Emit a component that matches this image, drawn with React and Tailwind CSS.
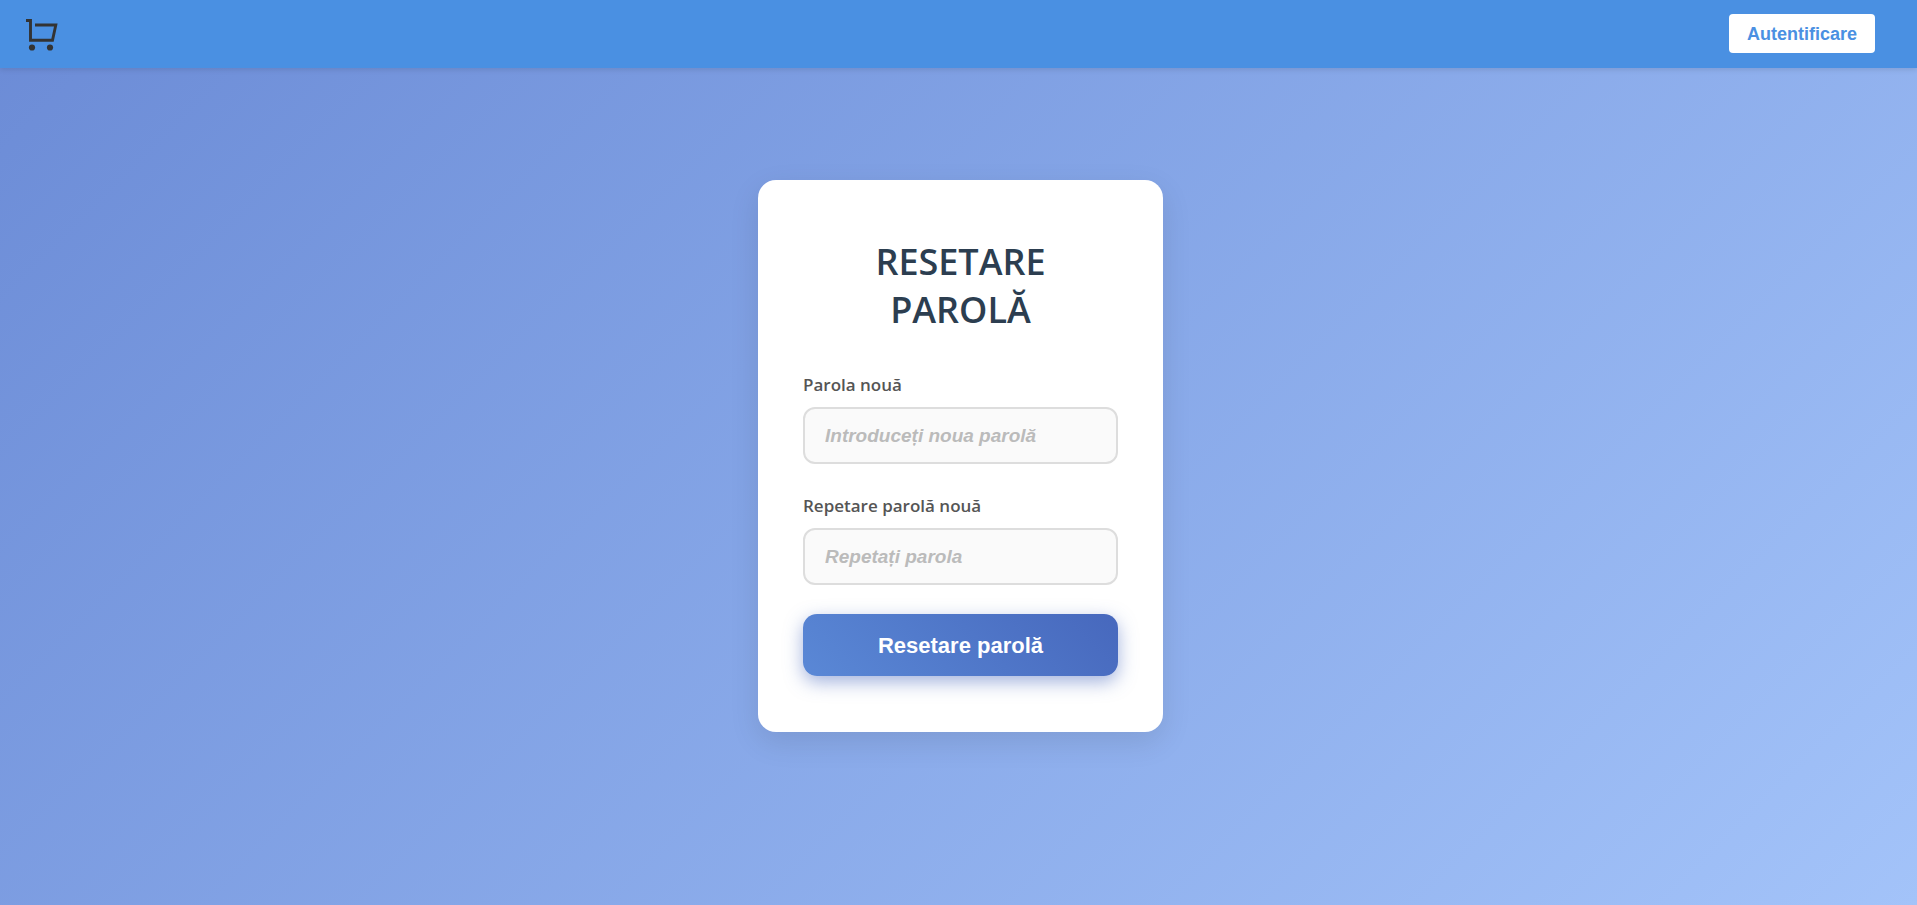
const fields = [
  { id: "new-password", label: "Parola nouă", placeholder: "Introduceți noua parolă" },
  { id: "repeat-password", label: "Repetare parolă nouă", placeholder: "Repetați parola" },
];

function CartIcon() {
  return (
    <svg viewBox="0 -3 32 35" className="h-[35px] w-8" fill="none" aria-hidden="true">
      <path d="M0 1.5H4.5V21.2H26.5L29.8 6H9" stroke="#333" strokeWidth="2.9" />
      <circle cx="6" cy="28.5" r="3.1" fill="#333" />
      <circle cx="24" cy="28.5" r="3.1" fill="#333" />
    </svg>
  );
}

export default function App() {
  return (
    <div className="flex min-h-screen flex-col bg-linear-135 from-[#6b8bd6] to-[#a3c3f9] font-['Liberation_Sans',sans-serif]">
      <header className="flex items-center justify-between bg-[#4a90e2] pt-3.5 pr-[42px] pb-[15px] pl-[26px] shadow-[0_2px_5px_rgba(0,0,0,0.1)]">
        <a href="#" aria-label="Coș">
          <CartIcon />
        </a>
        <button className="h-[39px] rounded-[4px] bg-white px-[18px] text-lg leading-5 font-bold text-[#4a90e2]">
          Autentificare
        </button>
      </header>
      <main className="flex justify-center pt-28 pb-14 pl-1">
        <form className="w-[405px] rounded-[18px] bg-white px-[45px] pt-[58px] pb-14 shadow-[0_10px_30px_rgba(0,0,0,0.1)]">
          <h1 className="mb-[39px] text-center font-['Open_Sans',sans-serif] text-4xl leading-12 font-semibold text-[#2c3e50]">
            RESETARE PAROLĂ
          </h1>
          <div className="mb-[29px] flex flex-col gap-[30px]">
            {fields.map((field) => (
              <div key={field.id} className="flex flex-col gap-2.5">
                <label
                  htmlFor={field.id}
                  className="font-['Open_Sans',sans-serif] text-[17px] leading-6 font-semibold text-[#555]"
                >
                  {field.label}
                </label>
                <input
                  id={field.id}
                  type="password"
                  placeholder={field.placeholder}
                  className="h-[57px] w-full rounded-xl border-2 border-[#ddd] bg-[#fafafa] px-5 text-[19px] font-bold placeholder:text-[#bbb] placeholder:italic"
                />
              </div>
            ))}
          </div>
          <button
            type="submit"
            className="h-[62px] w-full rounded-[14px] bg-linear-45 from-[#5a88d6] to-[#4768bd] text-[22px] font-bold text-white shadow-[0_6px_18px_rgba(71,104,189,0.5)]"
          >
            Resetare parolă
          </button>
        </form>
      </main>
    </div>
  );
}
